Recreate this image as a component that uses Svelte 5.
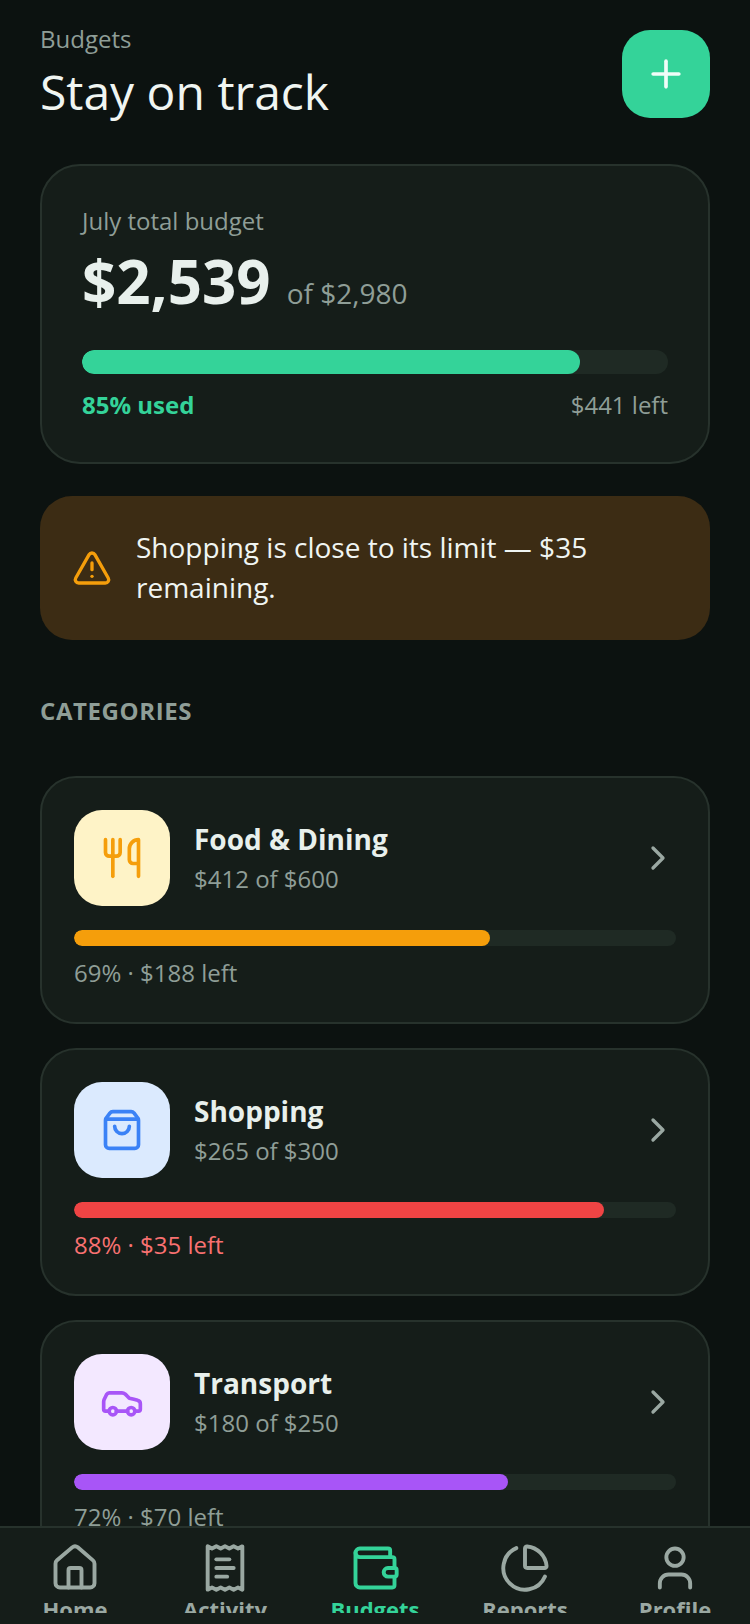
<script>
	const categories = [
		{ name: "Food & Dining", spent: "$412 of $600", pct: 69.1, left: "69% · $188 left", color: "#f59e0b", tile: "#fef3c7", icon: "food" },
		{ name: "Shopping", spent: "$265 of $300", pct: 88, left: "88% · $35 left", color: "#ef4444", tile: "#dbeafe", icon: "bag", stroke: "#3b82f6", warn: true },
		{ name: "Transport", spent: "$180 of $250", pct: 72.1, left: "72% · $70 left", color: "#a855f7", tile: "#f3e8ff", icon: "car" }
	];

	const tabs = [
		{ label: "Home", icon: "home" },
		{ label: "Activity", icon: "receipt" },
		{ label: "Budgets", icon: "wallet", active: true },
		{ label: "Reports", icon: "pie" },
		{ label: "Profile", icon: "user" }
	];
</script>

{#snippet glyph(name)}
	{#if name === "food"}
		<path d="M3 2v7c0 1.1.9 2 2 2h4a2 2 0 0 0 2-2V2" /><path d="M7 2v20" /><path d="M21 15V2a5 5 0 0 0-5 5v6c0 1.1.9 2 2 2h3Zm0 0v7" />
	{:else if name === "bag"}
		<path d="M16 10a4 4 0 0 1-8 0" /><path d="M3.103 6.034h17.794" /><path d="M3.4 5.467a2 2 0 0 0-.4 1.2V20a2 2 0 0 0 2 2h14a2 2 0 0 0 2-2V6.667a2 2 0 0 0-.4-1.2l-2.1-2.8A2 2 0 0 0 17 2H7a2 2 0 0 0-1.6.8z" />
	{:else if name === "car"}
		<path d="M19 17h2c.6 0 1-.4 1-1v-3c0-.9-.7-1.7-1.5-1.9C18.7 10.6 16 10 16 10s-1.3-1.4-2.2-2.3c-.5-.4-1.1-.7-1.8-.7H5c-.6 0-1.1.4-1.4.9l-1.4 2.9A3.7 3.7 0 0 0 2 12v4c0 .6.4 1 1 1h2" /><circle cx="7" cy="17" r="2" /><path d="M9 17h6" /><circle cx="17" cy="17" r="2" />
	{:else if name === "home"}
		<path d="M15 21v-8a1 1 0 0 0-1-1h-4a1 1 0 0 0-1 1v8" /><path d="M3 10a2 2 0 0 1 .709-1.528l7-5.999a2 2 0 0 1 2.582 0l7 5.999A2 2 0 0 1 21 10v9a2 2 0 0 1-2 2H5a2 2 0 0 1-2-2z" />
	{:else if name === "receipt"}
		<path d="M4 2v20l2-1 2 1 2-1 2 1 2-1 2 1 2-1 2 1V2l-2 1-2-1-2 1-2-1-2 1-2-1-2 1Z" /><path d="M14 8H8" /><path d="M16 12H8" /><path d="M13 16H8" />
	{:else if name === "wallet"}
		<path d="M19 7V4a1 1 0 0 0-1-1H5a2 2 0 0 0 0 4h15a1 1 0 0 1 1 1v4h-3a2 2 0 0 0 0 4h3a1 1 0 0 0 1-1v-2a1 1 0 0 0-1-1" /><path d="M3 5v14a2 2 0 0 0 2 2h15a1 1 0 0 0 1-1v-4" />
	{:else if name === "pie"}
		<path d="M21 12c.552 0 1.005-.449.95-.998a10 10 0 0 0-8.953-8.951c-.55-.055-.998.398-.998.95v8a1 1 0 0 0 1 1z" /><path d="M21.21 15.89A10 10 0 1 1 8 2.83" />
	{:else if name === "user"}
		<path d="M19 21v-2a4 4 0 0 0-4-4H9a4 4 0 0 0-4 4v2" /><circle cx="12" cy="7" r="4" />
	{/if}
{/snippet}

<div class="screen">
	<main>
		<header>
			<div>
				<div class="eyebrow">Budgets</div>
				<h1>Stay on track</h1>
			</div>
			<button class="add" aria-label="Add budget">
				<svg viewBox="0 0 24 24" width="44" height="44" stroke="#f0fdf8"><path d="M5 12h14" /><path d="M12 5v14" /></svg>
			</button>
		</header>

		<section class="hero">
			<div class="hero-label">July total budget</div>
			<div class="hero-amount"><strong>$2,539</strong><span>of $2,980</span></div>
			<div class="track hero-track"><div class="fill" style="width: 85%; background: #34d399"></div></div>
			<div class="hero-foot">
				<span class="used">85% used</span>
				<span>$441 left</span>
			</div>
		</section>

		<section class="alert">
			<svg viewBox="0 0 24 24" width="40" height="40" stroke="#f59e0b">
				<path d="m21.73 18-8-14a2 2 0 0 0-3.48 0l-8 14A2 2 0 0 0 4 21h16a2 2 0 0 0 1.73-3" /><path d="M12 9v4" /><path d="M12 17h.01" />
			</svg>
			<p>Shopping is close to its limit — $35 remaining.</p>
		</section>

		<h2>CATEGORIES</h2>

		<div class="list">
			{#each categories as cat}
				<article class="card">
					<div class="row">
						<div class="tile" style="background: {cat.tile}">
							<svg viewBox="0 0 24 24" width="44" height="44" stroke={cat.stroke ?? cat.color}>{@render glyph(cat.icon)}</svg>
						</div>
						<div class="info">
							<div class="name">{cat.name}</div>
							<div class="spent">{cat.spent}</div>
						</div>
						<svg class="chev" viewBox="0 0 24 24" width="40" height="40" stroke="#9aa8a2"><path d="m9 18 6-6-6-6" /></svg>
					</div>
					<div class="track"><div class="fill" style="width: {cat.pct}%; background: {cat.color}"></div></div>
					<div class="left" class:warn={cat.warn}>{cat.left}</div>
				</article>
			{/each}
		</div>
	</main>

	<nav>
		{#each tabs as tab}
			<div class="tab" class:active={tab.active}>
				<svg viewBox="0 0 24 24" width="52" height="52" stroke="currentColor">{@render glyph(tab.icon)}</svg>
				<span>{tab.label}</span>
			</div>
		{/each}
	</nav>
</div>

<style>
	:global(body) {
		background: #0c1210;
	}

	svg {
		display: block;
		fill: none;
		stroke-width: 2;
		stroke-linecap: round;
		stroke-linejoin: round;
		flex: none;
	}

	.screen {
		width: 750px;
		height: 1624px;
		display: flex;
		flex-direction: column;
		overflow: hidden;
		background: #0c1210;
		color: #e8f0ec;
		font-family: "Open Sans", sans-serif;
	}

	main {
		flex: 1;
		min-height: 0;
		overflow: hidden;
		padding: 22px 40px 0;
	}

	header {
		display: flex;
		justify-content: space-between;
		align-items: flex-start;
	}

	.eyebrow {
		font-size: 24px;
		line-height: 34px;
		color: #8f9e97;
	}

	h1 {
		margin: 4px 0 0;
		font-size: 48px;
		line-height: 64px;
		font-weight: 400;
		color: #f0f5f2;
	}

	.add {
		width: 88px;
		height: 88px;
		margin-top: 8px;
		border: none;
		border-radius: 28px;
		background: #34d399;
		display: flex;
		align-items: center;
		justify-content: center;
		padding: 0;
	}

	.hero {
		margin-top: 40px;
		padding: 38px 40px 0;
		height: 300px;
		box-sizing: border-box;
		background: #151d19;
		border: 2px solid #27322c;
		border-radius: 40px;
	}

	.hero-label {
		font-size: 24px;
		line-height: 34px;
		color: #8f9e97;
	}

	.hero-amount {
		display: flex;
		align-items: baseline;
		gap: 16px;
		margin-top: 5px;
		line-height: 76px;
	}

	.hero-amount strong {
		font-size: 60px;
		font-weight: 700;
	}

	.hero-amount span {
		font-size: 28px;
		color: #8f9e97;
	}

	.track {
		height: 16px;
		border-radius: 8px;
		background: #1f2a24;
		overflow: hidden;
	}

	.hero-track {
		height: 24px;
		border-radius: 12px;
		margin-top: 19px;
	}

	.fill {
		height: 100%;
		border-radius: inherit;
	}

	.hero-foot {
		display: flex;
		justify-content: space-between;
		margin-top: 14px;
		font-size: 24px;
		line-height: 34px;
		color: #8f9e97;
	}

	.used {
		color: #34d399;
		font-weight: 700;
	}

	.alert {
		margin-top: 32px;
		display: flex;
		align-items: center;
		gap: 24px;
		padding: 24px 32px;
		height: 144px;
		box-sizing: border-box;
		background: #3c2c14;
		border-radius: 32px;
	}

	.alert p {
		margin: 0 0 2px;
		font-size: 28px;
		line-height: 40px;
		color: #f0f5f2;
	}

	h2 {
		margin: 54px 0 0;
		font-size: 24px;
		line-height: 34px;
		font-weight: 700;
		letter-spacing: 0.6px;
		color: #8f9e97;
	}

	.list {
		margin-top: 48px;
		display: flex;
		flex-direction: column;
		gap: 24px;
	}

	.card {
		padding: 32px;
		background: #151d19;
		border: 2px solid #27322c;
		border-radius: 36px;
	}

	.row {
		display: flex;
		align-items: center;
		gap: 24px;
		margin-bottom: 24px;
	}

	.tile {
		width: 96px;
		height: 96px;
		border-radius: 28px;
		display: flex;
		align-items: center;
		justify-content: center;
		flex: none;
	}

	.info {
		flex: 1;
		padding-bottom: 1px;
	}

	.name {
		font-size: 28px;
		line-height: 38px;
		font-weight: 700;
	}

	.spent {
		margin-top: 4px;
		font-size: 24px;
		line-height: 34px;
		color: #8f9e97;
	}

	.chev {
		margin-right: -2px;
	}

	.left {
		margin-top: 9px;
		font-size: 24px;
		line-height: 35px;
		color: #8f9e97;
	}

	.left.warn {
		color: #f87171;
	}

	nav {
		flex: none;
		height: 98px;
		box-sizing: border-box;
		display: flex;
		padding: 14px 0 11px;
		background: #151d19;
		border-top: 2px solid #27322c;
	}

	.tab {
		flex: 1;
		display: flex;
		flex-direction: column;
		align-items: center;
		overflow: hidden;
		color: #9aa8a2;
	}

	.tab svg {
		stroke-width: 1.8;
	}

	.tab span {
		font-size: 22px;
		line-height: 30px;
		font-weight: 700;
	}

	.tab.active {
		color: #34d399;
	}
</style>
